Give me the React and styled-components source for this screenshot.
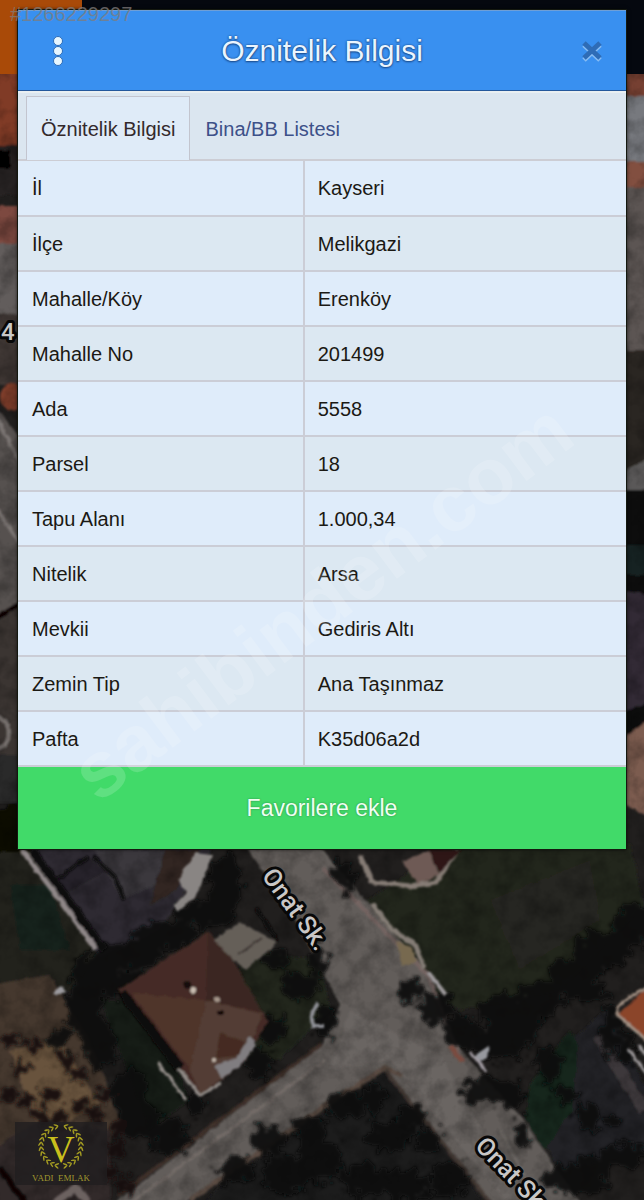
import React, { useState } from 'react'
import styled, { createGlobalStyle } from 'styled-components'

const GlobalStyle = createGlobalStyle`
    * {
        box-sizing: border-box;
    }
    body {
        margin: 0;
        background-color: #151413;
        font-family: "Liberation Sans", Arial, sans-serif;
    }
`
const Page = styled.div`
    position: relative;
    display: flex;
    flex-direction: column;
    min-height: 100vh;
    padding: 10px 0px 15px;
    overflow: hidden;
`
const Backdrop = styled.svg`
    position: absolute;
    top: 0;
    left: 0;
    width: 100%;
    height: 100%;
`
const Watermark = styled(Backdrop)`
    pointer-events: none;
`
const AdNumber = styled.span`
    position: absolute;
    top: 2px;
    left: 10px;
    font-size: 20px;
    line-height: 24px;
    color: rgba(128, 124, 122, 0.75);
`
const Panel = styled.section`
    position: relative;
    margin: 0px 18px;
    background-color: #dfebf8;
    outline: 1px solid #14180f;
    box-shadow: 0px 0px 4px black;
`
const Header = styled.header`
    display: grid;
    grid-template-columns: 80px 1fr 80px;
    align-items: center;
    height: 81px;
    background-color: #3990f0;
    border-top: 1px solid #6f9fd6;
    border-bottom: 1px solid #24589c;
`
const Title = styled.h1`
    margin: 0;
    font-size: 30px;
    font-weight: 400;
    line-height: 36px;
    text-align: center;
    color: #eaf5ff;
    text-shadow: 0px 0px 2px #123f7c, 0px 1px 2px #1f4f90;
`
const IconButton = styled.button`
    display: flex;
    align-items: center;
    justify-content: center;
    justify-self: ${props=>props.$end ? "end" : "start"};
    width: ${props=>props.$end ? "68px" : "80px"};
    height: 40px;
    padding: 0;
    border: none;
    background: none;
    cursor: pointer;
`
const TabList = styled.div`
    display: flex;
    align-items: flex-end;
    height: 70px;
    padding: 0px 8px;
    background-color: #dbe6f0;
    border-top: 2px solid #e9eff2;
    border-bottom: 2px solid #cccdd4;
`
const Tab = styled.button`
    height: 64px;
    margin-bottom: -1px;
    padding: 0px 14px;
    border: 1px solid ${props=>props.$active ? "#c3c5cf" : "transparent"};
    border-bottom: none;
    background-color: ${props=>props.$active ? "#dfebf8" : "transparent"};
    color: ${props=>props.$active ? "#33292c" : "#3d5189"};
    font-family: inherit;
    font-size: 20px;
    line-height: 24px;
    cursor: pointer;
`
const Table = styled.table`
    width: 100%;
    border-collapse: collapse;
    table-layout: fixed;
`
const Row = styled.tr`
    height: 55px;
    background-color: #dfecfa;
    &:nth-child(even) {
        background-color: #dce8f2;
    }
`
const Label = styled.th`
    width: 47%;
    padding: 0px 14px;
    border: 2px solid #cbcdd6;
    border-left: none;
    border-top: none;
    font-size: 20px;
    font-weight: 400;
    line-height: 24px;
    text-align: left;
    color: #1b1914;
`
const Value = styled.td`
    padding: 0px 13px;
    border-bottom: 2px solid #cbcdd6;
    font-size: 20px;
    line-height: 24px;
    color: #1b1914;
`
const FavoriteButton = styled.button`
    display: block;
    width: 100%;
    height: 82px;
    padding: 0;
    border: none;
    background-color: #41da69;
    color: #effff2;
    font-family: inherit;
    font-size: 23px;
    line-height: 28px;
    text-shadow: 0px 0px 2px #2c8446;
    cursor: pointer;
`
const Agency = styled.footer`
    position: relative;
    display: flex;
    flex-direction: column;
    align-items: center;
    justify-content: space-between;
    width: 92px;
    height: 63px;
    margin: auto 0px 0px 15px;
    background-color: rgba(32, 30, 31, 0.8);
`
const AgencyName = styled.span`
    font-family: "Liberation Serif", "Times New Roman", serif;
    font-size: 9px;
    line-height: 14px;
    white-space: pre;
    color: #a1972f;
`

const rows = [
    ["İl", "Kayseri"],
    ["İlçe", "Melikgazi"],
    ["Mahalle/Köy", "Erenköy"],
    ["Mahalle No", "201499"],
    ["Ada", "5558"],
    ["Parsel", "18"],
    ["Tapu Alanı", "1.000,34"],
    ["Nitelik", "Arsa"],
    ["Mevkii", "Gediris Altı"],
    ["Zemin Tip", "Ana Taşınmaz"],
    ["Pafta", "K35d06a2d"],
]

const tabs = ["Öznitelik Bilgisi", "Bina/BB Listesi"]

// cx, cy, rx, ry
const trees = [
    [225, 885, 16, 30], [205, 915, 30, 12], [165, 935, 32, 14], [130, 955, 34, 15],
    [95, 975, 24, 22], [130, 985, 22, 14], [85, 1010, 18, 28], [100, 1045, 16, 24],
    [60, 1040, 10, 12], [130, 1090, 18, 20], [140, 1120, 22, 18], [165, 1130, 24, 10],
    [195, 1105, 12, 10], [170, 1145, 20, 8], [270, 1030, 16, 15], [258, 1062, 14, 16],
    [300, 985, 20, 14], [275, 960, 12, 10], [318, 960, 10, 14], [326, 1022, 10, 18],
    [268, 1140, 18, 16], [310, 1130, 16, 14], [235, 1170, 18, 14], [285, 1175, 24, 20],
    [320, 1160, 22, 22], [345, 1105, 18, 14], [372, 1098, 12, 16], [390, 1135, 22, 16],
    [410, 1115, 14, 12], [430, 1140, 14, 12], [365, 1180, 26, 16], [405, 1185, 26, 16],
    [450, 1180, 18, 18], [340, 870, 10, 10], [348, 885, 8, 10], [410, 990, 12, 12],
    [435, 1008, 18, 16], [462, 1032, 20, 16], [500, 1010, 24, 16], [500, 1045, 26, 16],
    [540, 1000, 24, 18], [575, 975, 26, 20], [605, 950, 28, 20], [632, 925, 22, 20],
    [590, 995, 18, 8], [515, 1025, 28, 18], [482, 1090, 20, 14], [510, 1095, 14, 14],
    [548, 1065, 14, 16], [567, 1094, 14, 8], [588, 1118, 12, 13], [613, 1120, 6, 7],
    [522, 1135, 7, 16], [560, 1178, 20, 12], [590, 1168, 22, 12], [625, 1155, 24, 12],
    [585, 1185, 24, 10], [610, 1030, 10, 26], [628, 1048, 8, 20],
]
const shrubs = [
    [20, 1070], [35, 1045], [50, 1095], [78, 1075], [80, 1105], [28, 1100], [60, 1120],
    [95, 1115], [105, 1095], [8, 1095], [42, 1115], [115, 1150], [110, 1172], [125, 1185],
    [68, 1060], [12, 1040], [120, 1130], [88, 1135],
]

const SatelliteMap = () => (
    <Backdrop viewBox="0 0 644 1200" preserveAspectRatio="xMidYMid slice" aria-hidden="true">
        <defs>
            <filter id="rough" x="-5%" y="-5%" width="110%" height="110%">
                <feTurbulence type="fractalNoise" baseFrequency="0.11" numOctaves="3" seed="4" />
                <feDisplacementMap in="SourceGraphic" scale="26" xChannelSelector="R" yChannelSelector="G" />
                <feGaussianBlur stdDeviation="1.6" />
            </filter>
            <filter id="worn" x="-5%" y="-5%" width="110%" height="110%">
                <feTurbulence type="fractalNoise" baseFrequency="0.12" numOctaves="2" seed="9" />
                <feDisplacementMap in="SourceGraphic" scale="4" xChannelSelector="R" yChannelSelector="G" />
                <feGaussianBlur stdDeviation="1" />
            </filter>
            <filter id="grain" x="0" y="0" width="100%" height="100%">
                <feTurbulence type="fractalNoise" baseFrequency="0.05" numOctaves="4" seed="2" />
                <feColorMatrix values="0 0 0 0 0  0 0 0 0 0  0 0 0 0 0  2.4 0 0 0 -0.95" />
            </filter>
        </defs>
        <rect width="644" height="1200" fill="#211f1e" />

        <g filter="url(#worn)">
            {/* left strip */}
            <rect x="-10" y="70" width="40" height="75" fill="#803a25" />
            <rect x="-10" y="145" width="40" height="50" fill="#282321" />
            <rect x="-10" y="150" width="20" height="18" fill="#050404" />
            <rect x="-10" y="206" width="40" height="38" fill="#7d4a40" />
            <rect x="-10" y="244" width="40" height="70" fill="#625d5c" />
            <rect x="-10" y="314" width="40" height="70" fill="#3f3936" />
            <ellipse cx="12" cy="397" rx="12" ry="14" fill="#7e3d2c" />
            <path d="M-10 400L30 450V610L-10 620z" fill="#57514f" />
            <path d="M-2 420L24 470M-4 508L24 550" stroke="#7d7775" strokeWidth="3" />
            <path d="M-10 625L30 600V760H-10z" fill="#3b3531" />
            <path d="M-10 622L30 598" stroke="#070606" strokeWidth="5" />
            <path d="M-4 716Q12 722 8 738T-6 745" fill="none" stroke="#77716e" strokeWidth="4" />
            <rect x="-10" y="755" width="40" height="48" fill="#2c2b2b" />
            <path d="M-10 815L30 795V860H-10z" fill="#080706" />

            {/* right strip */}
            <rect x="615" y="72" width="40" height="26" fill="#764132" />
            <rect x="615" y="96" width="40" height="66" fill="#77797e" />
            <rect x="615" y="162" width="40" height="26" fill="#82503f" />
            <rect x="615" y="188" width="40" height="170" fill="#5c5552" />
            <rect x="615" y="350" width="40" height="130" fill="#2b2521" />
            <path d="M615 475L655 455V485L615 500z" fill="#5a5858" />
            <rect x="615" y="490" width="40" height="260" fill="#0a0a0a" />
            <rect x="615" y="545" width="40" height="30" fill="#162422" />
            <path d="M615 590L655 595V700L615 715z" fill="#302c35" />
            <path d="M615 745L655 715V820L615 800z" fill="#7c5b50" />
        </g>

        <g filter="url(#worn)">
            {/* plots and ground */}
            <path d="M-10 852H30L100 955L60 1000L-10 990z" fill="#24231d" />
            <path d="M10 885L50 885L70 950L20 950z" fill="#15221b" />
            <path d="M-10 985L50 975L90 1040L120 1120L80 1210H-10z" fill="#44382f" />
            <path d="M10 1050L60 1040L100 1105L40 1135z" fill="#67523d" />
            <path d="M-10 1150L40 1120L110 1130V1210H-10z" fill="#302b2b" />
            <path d="M28 845H215L160 930L100 958z" fill="#2e2b30" />
            <path d="M95 850L165 850L155 885L122 900z" fill="#3a373c" />
            <path d="M55 878L88 857L105 872L65 893z" fill="#272429" />
            <path d="M165 850H200L175 890L150 905z" fill="#302621" />
            <path d="M100 1000L150 1000L190 1100L150 1130z" fill="#161e19" />
            <path d="M240 950L320 960L330 1010L280 1060L240 1060z" fill="#20281f" />
            <path d="M360 905L450 845H630L644 905L560 990L460 1010L420 990z" fill="#23251f" />
            <path d="M490 900L590 860L600 920L520 970z" fill="#272620" />
            <path d="M560 1050L610 1005L650 1100V1150L560 1170L530 1120z" fill="#212325" />
            <path d="M530 1085L570 1030L578 1045L572 1110L545 1150L525 1120z" fill="#18281b" />
            <path d="M215 1190L330 1110L383 1070L490 1210H200z" fill="#1b1b1e" />

            {/* roads */}
            <path d="M245 845H318L425 970L447 1032L480 1072L520 1115L582 1205H492L384 1068L322 1106L200 1192L175 1210H105L322 1046L340 1005L290 910z" fill="#625d5a" />
            <path d="M350 1010L440 1055L520 1200H505L390 1060L330 1070z" fill="#6a6562" />
            <path d="M118 1196L322 1044" stroke="#41302a" strokeWidth="4" />
            <path d="M128 1205L325 1060" stroke="#736c68" strokeWidth="3" />
            <path d="M190 1200L322 1108L384 1068L402 1075" fill="none" stroke="#5a4c43" strokeWidth="5" />
            <path d="M385 1070L492 1205" stroke="#453a36" strokeWidth="4" />
            <path d="M323 868L428 975L462 1062" fill="none" stroke="#756562" strokeWidth="4" />
            <path d="M500 1130L540 1205" stroke="#8b8580" strokeWidth="3" opacity="0.4" />
            <path d="M644 1110L598 1035" stroke="#3d393b" strokeWidth="12" />
        </g>

        <rect y="70" width="644" height="1130" filter="url(#grain)" opacity="0.24" />

        <g filter="url(#rough)" fill="#070808" opacity="0.92">
            {trees.map(([cx, cy, rx, ry]) => (
                <ellipse key={`${cx}-${cy}`} cx={cx} cy={cy} rx={rx} ry={ry} />
            ))}
            {shrubs.map(([cx, cy]) => (
                <circle key={`${cx}-${cy}`} cx={cx} cy={cy} r="8" fill="#16110e" />
            ))}
        </g>

        <g filter="url(#worn)">
            {/* roofs and walls */}
            <path d="M118 990L208 932L230 955L268 1022L244 1062L200 1097z" fill="#442b25" />
            <path d="M132 993L206 1000L192 1072z" fill="#4f342b" />
            <path d="M208 934L206 1000L262 1012L230 955z" fill="#3a2621" />
            <path d="M206 1000L262 1014L245 1060L200 1095L190 1070z" fill="#523e35" />
            <path d="M220 1032L245 1042L240 1056L216 1058z" fill="#452c20" />
            <path d="M214 940L240 922L278 942L246 970L228 955z" fill="#655f59" />
            <path d="M238 955L262 938" stroke="#3a332f" strokeWidth="2" />
            <path d="M256 908L278 942" stroke="#0b0909" strokeWidth="4" />
            <path d="M122 992L180 1068" stroke="#090707" strokeWidth="10" />
            <path d="M158 1063L186 1100M178 1068L200 1096L221 1083" fill="none" stroke="#918b87" strokeWidth="3" />
            <path d="M214 1066L236 1058L250 1036L256 1044L240 1066L222 1078z" fill="#807d80" />
            <circle cx="193" cy="990" r="3" fill="#c9bdb1" />
            <circle cx="217" cy="999" r="3" fill="#a8998d" />
            <circle cx="214" cy="1060" r="2" fill="#c9bdb1" />
            <circle cx="221" cy="1012" r="3" fill="#080606" />
            <circle cx="187" cy="985" r="4" fill="#120b09" />
            <path d="M22 850L60 900L96 949" fill="none" stroke="#8f8788" strokeWidth="5" />
            <path d="M32 850L72 905L104 950" fill="none" stroke="#090809" strokeWidth="8" />
            <path d="M58 879L88 857M94 857L114 876L124 900" fill="none" stroke="#0b0a0c" strokeWidth="4" />
            <path d="M195 853L212 855L200 888L194 898L178 912L174 906L186 892L178 880z" fill="#898583" />
            <path d="M52 992L62 986L66 992L56 996z" fill="#9b9a9e" />
            <path d="M318 1004Q308 1014 314 1026L324 1026" fill="none" stroke="#8f9096" strokeWidth="4" />
            <path d="M360 856L372 882L410 886L436 882L446 866L458 850" fill="none" stroke="#857b74" strokeWidth="5" />
            <path d="M402 862L428 850L440 874L418 884z" fill="#6e5a54" />
            <path d="M428 850H462L440 872z" fill="#2d1814" />
            <path d="M372 904L392 930L416 946L424 968" fill="none" stroke="#837b74" strokeWidth="5" />
            <path d="M396 940L412 948L416 962L402 966z" fill="#77694f" />
            <path d="M428 972L446 995" stroke="#9d999b" strokeWidth="4" />
            <path d="M474 1056L490 1045L488 1058L480 1062z" fill="#97999f" />
            <path d="M470 1052L486 1071" stroke="#a29ca3" strokeWidth="3" />
            <path d="M450 1045L462 1062" stroke="#7a4b40" strokeWidth="5" />
            <path d="M650 984L618 1014L650 1045z" fill="#8b452b" />
            <path d="M650 984L618 1006V1016L650 1043" fill="none" stroke="#a08f82" strokeWidth="3" />
            <path d="M629 1049L650 1078M638 1045L650 1060" stroke="#9b9799" strokeWidth="3" />
            <path d="M0 1168L26 1204" stroke="#070606" strokeWidth="6" />
            <path d="M55 1202L76 1188L88 1202" stroke="#6c6261" strokeWidth="7" fill="none" />
        </g>

        {/* status area above the map */}
        <rect x="0" y="0" width="644" height="74" fill="#05080f" />
        <rect x="0" y="0" width="82" height="74" fill="#a94a08" />

        <g
            fill="#c9c7c6"
            stroke="#080808"
            strokeWidth="6"
            strokeLinejoin="round"
            paintOrder="stroke"
            fontFamily="Roboto, sans-serif"
            fontWeight="500"
        >
            <text x="1" y="340" fontSize="24">4</text>
            <text transform="translate(261 876) rotate(54)" fontSize="25">Onat Sk.</text>
            <text transform="translate(474 1147) rotate(46)" fontSize="25">Onat Sk.</text>
        </g>
    </Backdrop>
)

const leaves = [16, 30, 44, 58, 72, 86, 100, 114, 128, 142, 156, 170]

const Wreath = () => (
    <svg width="52" height="48" viewBox="0 0 52 48" fill="#a39b22">
        {[1, -1].map((side) => (
            <g key={side} transform={`translate(26 24) scale(${side} 1)`}>
                {leaves.map((angle) => (
                    <g key={angle} transform={`rotate(${angle}) translate(0 -20)`}>
                        <ellipse cx="0" cy="-1.5" rx="2.6" ry="0.8" transform="rotate(-32)" />
                        <ellipse cx="0" cy="1.5" rx="2.4" ry="0.8" transform="rotate(32)" />
                    </g>
                ))}
            </g>
        ))}
        <text x="26" y="40" fontSize="38" textAnchor="middle" fontFamily="Liberation Serif, serif" fill="#c9bf1c">V</text>
    </svg>
)

const App = () => {
  const [active, setActive] = useState(0)

  return (
    <Page>
        <GlobalStyle/>
        <SatelliteMap/>
        <Panel>
            <Header>
                <IconButton aria-label="Menü">
                    <svg width="12" height="32" viewBox="0 0 12 32" fill="#e6f6ff" stroke="#2d6cb8" strokeWidth="1">
                        <circle cx="6" cy="6" r="4.5" />
                        <circle cx="6" cy="16" r="4.5" />
                        <circle cx="6" cy="26" r="4.5" />
                    </svg>
                </IconButton>
                <Title>Öznitelik Bilgisi</Title>
                <IconButton $end aria-label="Kapat">
                    <svg width="24" height="24" viewBox="0 0 24 24" fill="none" strokeWidth="5">
                        <path d="M4 6L20 21M20 6L4 21" stroke="#86bcf3" />
                        <path d="M4 4L20 19M20 4L4 19" stroke="#2e6cb6" />
                    </svg>
                </IconButton>
            </Header>
            <TabList role="tablist">
                {tabs.map((tab, index) => (
                    <Tab
                        key={tab}
                        role="tab"
                        aria-selected={active === index}
                        $active={active === index}
                        onClick={() => setActive(index)}
                    >
                        {tab}
                    </Tab>
                ))}
            </TabList>
            <Table>
                <tbody>
                    {rows.map(([label, value]) => (
                        <Row key={label}>
                            <Label scope="row">{label}</Label>
                            <Value>{value}</Value>
                        </Row>
                    ))}
                </tbody>
            </Table>
            <FavoriteButton>Favorilere ekle</FavoriteButton>
        </Panel>
        <Agency>
            <Wreath/>
            <AgencyName>VADI  EMLAK</AgencyName>
        </Agency>
        <AdNumber>#1266229297</AdNumber>
        <Watermark viewBox="0 0 644 1200" preserveAspectRatio="xMidYMid slice">
            <text
                transform="translate(98 804) rotate(-37)"
                fontSize="79"
                fontWeight="700"
                fill="white"
                fillOpacity="0.16"
            >
                sahibinden.com
            </text>
        </Watermark>
    </Page>
  )
}

export default App
